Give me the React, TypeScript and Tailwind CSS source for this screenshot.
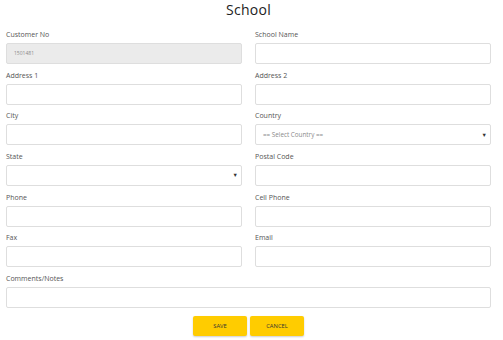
const font = { fontFamily: '"Open Sans", "Liberation Sans", sans-serif' };

function Label({ children }: { children: React.ReactNode }) {
  return (
    <label className="block h-[14px] mb-[2px] leading-[15px] text-[7px] text-[#555]">
      {children}
    </label>
  );
}

function Field({ label, value, disabled }: { label: string; value?: string; disabled?: boolean }) {
  return (
    <div>
      <Label>{label}</Label>
      <div
        className={
          "h-[21px] rounded-[2px] border border-[#dedede] flex items-center px-[7px] text-[5px] text-[#8a8a8a] " +
          (disabled ? "bg-[#ebebeb]" : "bg-white")
        }
      >
        {value}
      </div>
    </div>
  );
}

function SelectField({ label, placeholder }: { label: string; placeholder?: string }) {
  return (
    <div>
      <Label>{label}</Label>
      <div className="h-[21px] rounded-[2px] border border-[#dedede] bg-white flex items-center justify-between pl-[7px] pr-[3px] text-[6.3px] text-[#8a8a8a]">
        <span>{placeholder}</span>
        <span className="text-[5.5px] text-[#333]">▼</span>
      </div>
    </div>
  );
}

export default function App() {
  return (
    <div className="w-[503px] h-[340px] bg-white pl-[6px] pr-[12px]" style={font}>
      <h1 className="h-[20px] leading-[20px] mb-[7px] text-center text-[14px] text-[#222] tracking-[0.3px]">
        School
      </h1>
      <div className="grid grid-cols-2 gap-x-[13px] gap-y-[3.66px]">
        <Field label="Customer No" value="1501481" disabled />
        <Field label="School Name" />
        <Field label="Address 1" />
        <Field label="Address 2" />
        <Field label="City" />
        <SelectField label="Country" placeholder="== Select Country ==" />
        <SelectField label="State" />
        <Field label="Postal Code" />
        <Field label="Phone" />
        <Field label="Cell Phone" />
        <Field label="Fax" />
        <Field label="Email" />
        <div className="col-span-2">
          <Field label="Comments/Notes" />
        </div>
      </div>
      <div className="flex justify-center gap-[3px] mt-[8px]">
        <button className="w-[54px] h-[20px] rounded-[2px] bg-[#ffcc00] text-[5.8px] text-[#333] shadow-[0_1px_2px_rgba(0,0,0,0.2)]">
          SAVE
        </button>
        <button className="w-[54px] h-[20px] rounded-[2px] bg-[#ffcc00] text-[5.8px] text-[#333] shadow-[0_1px_2px_rgba(0,0,0,0.2)]">
          CANCEL
        </button>
      </div>
    </div>
  );
}
